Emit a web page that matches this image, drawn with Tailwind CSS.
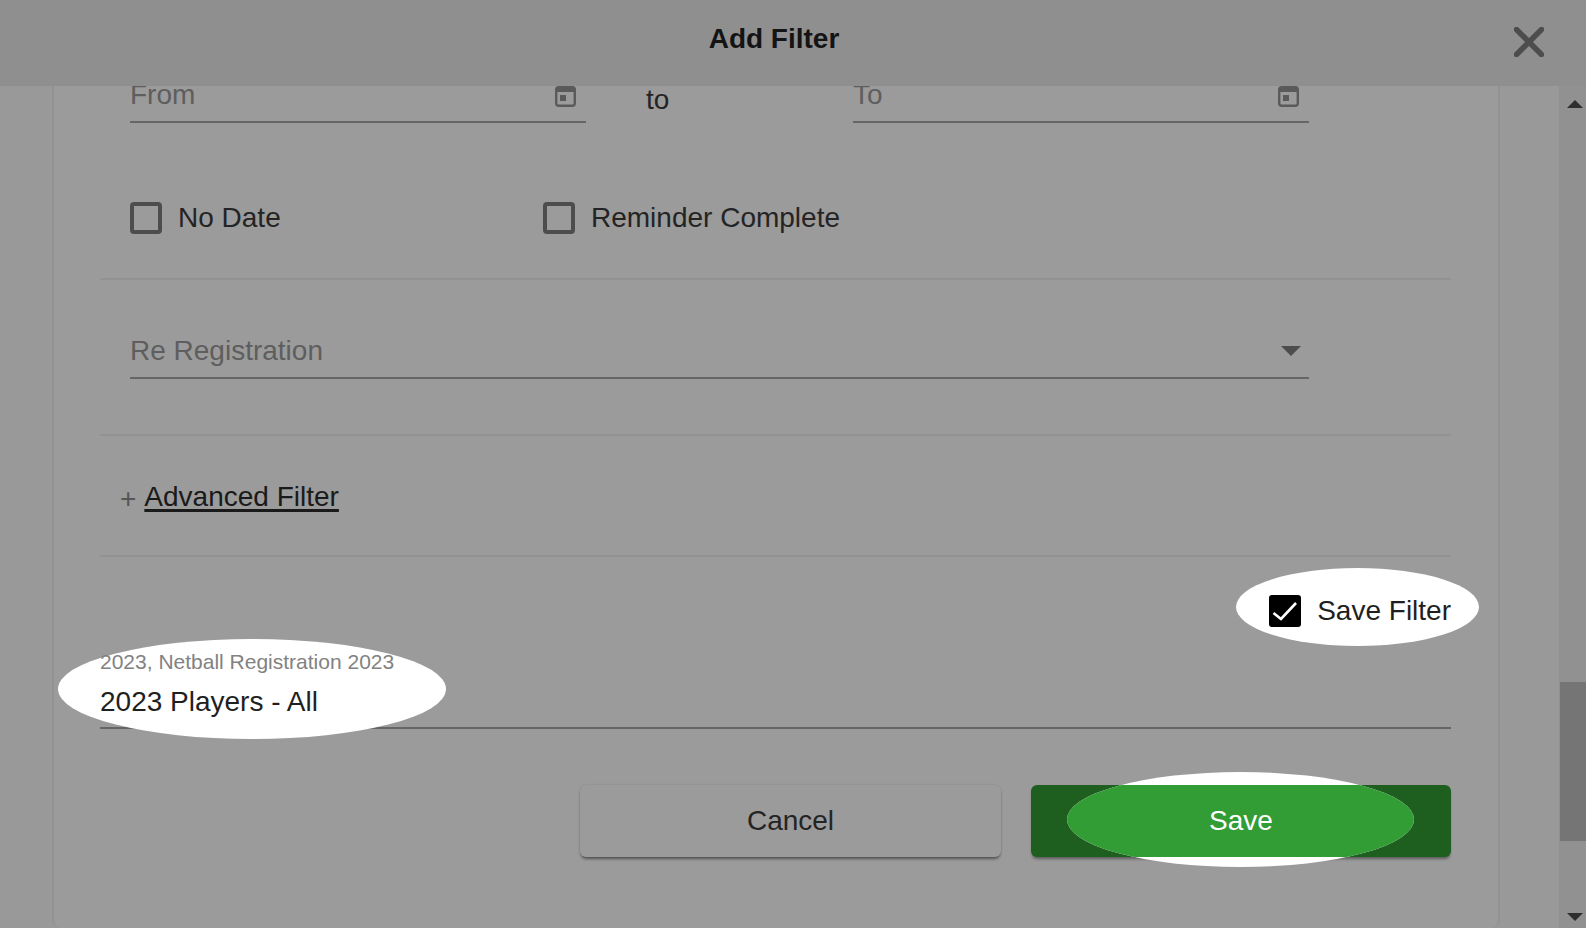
<!DOCTYPE html>
<html>
<head>
<meta charset="utf-8">
<script src="https://cdn.jsdelivr.net/npm/@tailwindcss/browser@4"></script>
</head>
<body class="overflow-hidden">
<div class="relative flex h-[928px] w-[1586px] flex-col overflow-hidden bg-[#999999] font-['Liberation_Sans',Arial,sans-serif] text-[28px] text-[#1a1a1a]">
  <!-- header -->
  <header class="relative z-20 flex h-[86px] w-full shrink-0 items-center justify-center bg-[#8f8f8f]">
    <h1 class="relative -top-[4px] left-[-19px] text-[28px] font-bold text-[#141414]">Add Filter</h1>
    <svg class="absolute left-[1514px] top-[27px] h-[30px] w-[30px]" viewBox="0 0 30 30" fill="none" stroke="#4d4d4d" stroke-width="5.5" stroke-linecap="round"><path d="M2.5 2.5 27.5 27.5M27.5 2.5 2.5 27.5"/></svg>
  </header>

  <div class="flex min-h-0 flex-1">
    <!-- scrolled page area -->
    <main class="min-w-0 flex-1 pl-[52px] pr-[59px]">
      <section class="-mt-[13px] h-[855px] rounded-b-lg border-x-2 border-[#929292] bg-[#9b9b9b] pl-[46px] pr-[47px]">
        <!-- date row -->
        <div class="flex h-[50px] items-start pl-[30px]">
          <div class="flex h-[50px] w-[456px] items-start justify-between border-b-2 border-[#666666] pr-[10px] text-[#5e5e5e]">
            <span class="pt-[6px] leading-[32px]">From</span>
            <svg class="mt-[13px] h-[21px] w-[21px]" viewBox="0 0 21 21" fill="none"><rect x="1.2" y="1.2" width="18.6" height="18.6" rx="2.5" stroke="#5a5a5a" stroke-width="2.4"/><rect x="1" y="1" width="19" height="5" fill="#5a5a5a"/><rect x="5" y="9" width="6" height="6" fill="#5a5a5a"/></svg>
          </div>
          <span class="w-[267px] pl-[60px] pt-[11px] leading-[32px] text-[#242424]">to</span>
          <div class="flex h-[50px] w-[456px] items-start justify-between border-b-2 border-[#666666] pr-[10px] text-[#5e5e5e]">
            <span class="pt-[6px] leading-[32px]">To</span>
            <svg class="mt-[13px] h-[21px] w-[21px]" viewBox="0 0 21 21" fill="none"><rect x="1.2" y="1.2" width="18.6" height="18.6" rx="2.5" stroke="#5a5a5a" stroke-width="2.4"/><rect x="1" y="1" width="19" height="5" fill="#5a5a5a"/><rect x="5" y="9" width="6" height="6" fill="#5a5a5a"/></svg>
          </div>
        </div>

        <!-- checkboxes -->
        <div class="flex h-[157px] items-center border-b-2 border-[#929292] pl-[30px] pt-[35px]">
          <label class="flex w-[413px] items-center gap-[16px]">
            <span class="h-[32px] w-[32px] rounded-[4px] border-[4px] border-[#4d4d4d]"></span>
            <span class="text-[#242424]">No Date</span>
          </label>
          <label class="flex items-center gap-[16px]">
            <span class="h-[32px] w-[32px] rounded-[4px] border-[4px] border-[#4d4d4d]"></span>
            <span class="text-[#242424]">Reminder Complete</span>
          </label>
        </div>

        <!-- re registration -->
        <div class="h-[156px] border-b-2 border-[#929292] pl-[30px] pr-[142px] pt-[50px]">
          <div class="flex h-[49px] items-center justify-between border-b-2 border-[#666666] pb-[5px] pr-[8px] text-[#5e5e5e]">
            <span>Re Registration</span>
            <svg class="h-[10px] w-[20px]" viewBox="0 0 20 10"><path d="M0 0H20L10 10Z" fill="#4d4d4d"/></svg>
          </div>
        </div>

        <!-- advanced -->
        <div class="flex h-[121px] items-center gap-[8px] border-b-2 border-[#929292] pl-[20px] pt-[3px]">
          <span class="relative top-[2px] text-[28px] font-light text-[#555555]">+</span>
          <a class="text-[#1a1a1a] underline decoration-[2.5px] underline-offset-[3px]">Advanced Filter</a>
        </div>

        <!-- save name field -->
        <div class="relative z-10 flex h-[172px] flex-col justify-end border-b-2 border-[#666666]">
          <span class="absolute left-[-42px] top-[82px] -z-10 h-[100px] w-[388px] rounded-[50%] bg-white"></span>
          <span class="absolute right-[-28px] top-[11px] -z-10 h-[78px] w-[243px] rounded-[50%] bg-white"></span>
          <div class="absolute right-0 top-[33px] flex items-center gap-[16px]">
            <svg class="h-[32px] w-[32px]" viewBox="0 0 32 32"><rect width="32" height="32" rx="3" fill="#000"/><path d="M4.5 18 12 24 27 8" fill="none" stroke="#fff" stroke-width="2.6"/></svg>
            <span class="text-[#1f1f1f]">Save Filter</span>
          </div>
          <span class="text-[21px] leading-[24px] text-[#828282]">2023, Netball Registration 2023</span>
          <span class="mt-[12px] pb-[9px] leading-[32px] text-[#1f1f1f]">2023 Players - All</span>
        </div>

        <!-- buttons -->
        <div class="mt-[56px] flex justify-end gap-[30px]">
          <button class="h-[72px] w-[421px] rounded-[6px] bg-[#9b9b9b] text-[#242424] shadow-[0_3px_3px_-1px_rgba(0,0,0,0.45),0_0_2px_rgba(0,0,0,0.15)]">Cancel</button>
          <div class="relative h-[72px] w-[420px] rounded-[6px] bg-[#1e5f20] shadow-[0_3px_3px_-1px_rgba(0,0,0,0.4)]">
            <span class="absolute left-[36px] top-[-13px] h-[95px] w-[347px] overflow-hidden rounded-[50%] bg-white">
              <span class="absolute left-[-36px] top-[13px] h-[72px] w-[420px] bg-[#329c35]"></span>
            </span>
            <span class="absolute inset-0 flex items-center justify-center text-white">Save</span>
          </div>
        </div>
      </section>
    </main>

    <!-- scrollbar -->
    <aside class="flex w-[27px] shrink-0 flex-col items-center bg-[#919191] pb-[7px] pl-[5px] pt-[14px]">
      <svg class="h-[8px] w-[16px] shrink-0" viewBox="0 0 16 8"><path d="M0 8H16L8 0Z" fill="#2e2e2e"/></svg>
      <div class="mt-[574px] h-[159px] w-[26px] shrink-0 self-end bg-[#757575]"></div>
      <svg class="mt-auto h-[8px] w-[16px] shrink-0" viewBox="0 0 16 8"><path d="M0 0H16L8 8Z" fill="#2e2e2e"/></svg>
    </aside>
  </div>
</div>
</body>
</html>
